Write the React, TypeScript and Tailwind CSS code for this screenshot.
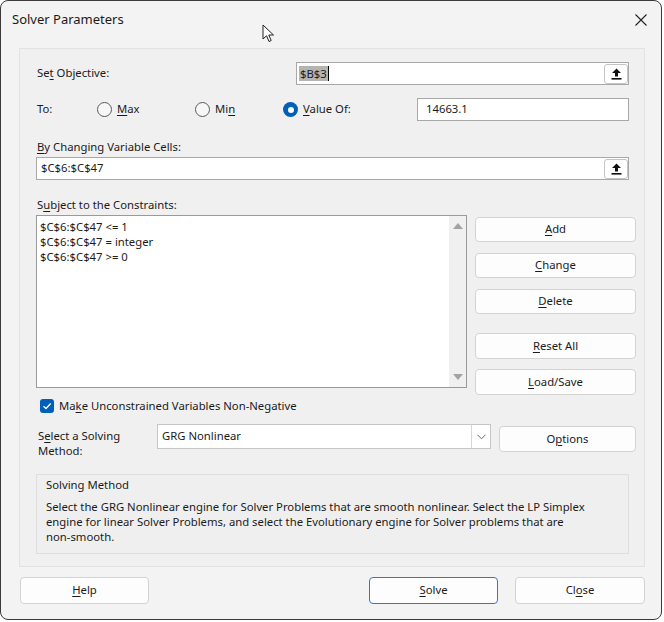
import React from "react";

const F = { fontFamily: '"Noto Sans", "Open Sans", sans-serif' };

function UploadIcon() {
  return (
    <svg width="11" height="12" viewBox="0 0 11 12">
      <path d="M5.5 0.5 L10 5 H7 V8.5 H4 V5 H1 Z" fill="#111" />
      <rect x="0.5" y="10" width="10" height="1.6" fill="#111" />
    </svg>
  );
}

function RefInput({ width, children }: { width: string; children?: React.ReactNode }) {
  return (
    <div className={`${width} h-[23px] bg-white border border-[#a8a8a8] flex items-center relative`}>
      <div className="flex-1 pl-[2px] flex items-center">{children}</div>
      <div className="w-[24px] h-[20px] rounded-[3px] border border-[#c4c4c4] bg-white flex items-center justify-center">
        <UploadIcon />
      </div>
    </div>
  );
}

function Radio({ checked }: { checked?: boolean }) {
  if (checked) {
    return (
      <div className="w-[15px] h-[15px] rounded-full bg-[#005fb8] flex items-center justify-center">
        <div className="w-[6px] h-[6px] rounded-full bg-white" />
      </div>
    );
  }
  return <div className="w-[15px] h-[15px] rounded-full border border-[#5a5a5a] bg-[#f7f7f7]" />;
}

function Btn({ className, children }: { className: string; children: React.ReactNode }) {
  return (
    <div className={`${className} rounded-[4px] border border-[#d3d3d3] bg-[#fdfdfd] flex items-center justify-center text-[11.3px] text-[#1b1b1b]`}>
      <span>{children}</span>
    </div>
  );
}

export default function App() {
  return (
    <div className="w-[664px] h-[622px] bg-white relative text-[#1b1b1b]" style={F}>
      <div className="w-[662px] h-[620px] border border-[#3a3a3a] rounded-[8px] bg-[#f3f3f3] flex flex-col">
        {/* title bar */}
        <div className="h-[38px] flex items-center justify-between pl-[11px] pr-[14px]">
          <span className="text-[13px] text-[#1a1a1a]">Solver Parameters</span>
          <svg width="12" height="12" viewBox="0 0 12 12">
            <path d="M0.5 0.5 L11.5 11.5 M11.5 0.5 L0.5 11.5" stroke="#222" strokeWidth="1.1" />
          </svg>
        </div>
        {/* panel */}
        <div className="ml-[18px] mt-[9px] w-[626px] h-[519px] border border-[#e2e2e2] bg-[#f0f0f0] pl-[16px] flex flex-col text-[11.3px]">
          {/* row 1 */}
          <div className="mt-[13px] h-[23px] flex items-center">
            <div className="w-[260px] pl-[1px]">
              Se<u className="underline-offset-2">t</u> Objective:
            </div>
            <RefInput width="w-[333px]">
              <span className="bg-[#b4b4b4] px-[1px] leading-[15px]">$B$3</span>
              <span className="w-[1px] h-[15px] bg-black" />
            </RefInput>
          </div>
          {/* row 2 */}
          <div className="mt-[13px] h-[23px] flex items-center">
            <div className="w-[61px] pl-[1px]">To:</div>
            <div className="w-[98px] flex items-center gap-[5px]">
              <Radio />
              <span>
                <u className="underline-offset-2">M</u>ax
              </span>
            </div>
            <div className="w-[88px] flex items-center gap-[5px]">
              <Radio />
              <span>
                Mi<u className="underline-offset-2">n</u>
              </span>
            </div>
            <div className="w-[134px] flex items-center gap-[5px]">
              <Radio checked />
              <span>
                <u className="underline-offset-2">V</u>alue Of:
              </span>
            </div>
            <div className="w-[212px] h-[23px] bg-white border border-[#a8a8a8] flex items-center pl-[8px]">14663.1</div>
          </div>
          {/* row 3 */}
          <div className="mt-[18px] h-[16px] flex items-center pl-[1px]">
            <span>
              <u className="underline-offset-2">B</u>y Changing Variable Cells:
            </span>
          </div>
          <div className="mt-[2px]">
            <RefInput width="w-[593px]">
              <span className="pl-[2px]">$C$6:$C$47</span>
            </RefInput>
          </div>
          {/* row 5 */}
          <div className="mt-[17px] h-[16px] flex items-center pl-[1px]">
            <span>
              S<u className="underline-offset-2">u</u>bject to the Constraints:
            </span>
          </div>
          {/* row 6 */}
          <div className="mt-[2px] h-[173px] flex items-start gap-[8px]">
            <div className="w-[431px] h-[173px] bg-white border border-[#9a9a9a] flex">
              <div className="flex-1 pl-[3px] pt-[3px] leading-[15px]">
                <div>$C$6:$C$47 &lt;= 1</div>
                <div>$C$6:$C$47 = integer</div>
                <div>$C$6:$C$47 &gt;= 0</div>
              </div>
              <div className="w-[17px] bg-[#f0f0f0] flex flex-col items-center justify-between py-[7px]">
                <svg width="10" height="6" viewBox="0 0 10 6">
                  <path d="M5 0 L10 6 H0 Z" fill="#a3a3a3" />
                </svg>
                <svg width="10" height="6" viewBox="0 0 10 6">
                  <path d="M0 0 H10 L5 6 Z" fill="#a3a3a3" />
                </svg>
              </div>
            </div>
            <div className="mt-[2px] w-[161px] flex flex-col">
              <Btn className="h-[25px]">
                <u className="underline-offset-2">A</u>dd
              </Btn>
              <Btn className="h-[25px] mt-[11px]">
                <u className="underline-offset-2">C</u>hange
              </Btn>
              <Btn className="h-[25px] mt-[11px]">
                <u className="underline-offset-2">D</u>elete
              </Btn>
              <Btn className="h-[26px] mt-[19px]">
                <u className="underline-offset-2">R</u>eset All
              </Btn>
              <Btn className="h-[26px] mt-[10px]">
                <u className="underline-offset-2">L</u>oad/Save
              </Btn>
            </div>
          </div>
          {/* row 7 */}
          <div className="mt-[10px] h-[16px] flex items-center gap-[5px] pl-[4px]">
            <div className="w-[14px] h-[14px] rounded-[3px] bg-[#005fb8] flex items-center justify-center">
              <svg width="10" height="8" viewBox="0 0 10 8">
                <path d="M1.5 4.2 L4 6.5 L8.7 1.5" stroke="white" strokeWidth="1.3" fill="none" />
              </svg>
            </div>
            <span>
              Ma<u className="underline-offset-2">k</u>e Unconstrained Variables Non-Negative
            </span>
          </div>
          {/* row 8 */}
          <div className="mt-[10px] h-[36px] flex items-start">
            <div className="w-[121px] pl-[2px] pt-[4px] leading-[15px]">
              <div>
                S<u className="underline-offset-2">e</u>lect a Solving
              </div>
              <div>Method:</div>
            </div>
            <div className="w-[334px] h-[25px] bg-white border border-[#c6c6c6] flex items-center">
              <div className="flex-1 pl-[4px]">GRG Nonlinear</div>
              <div className="w-[19px] h-[23px] border-l border-[#d6d6d6] flex items-center justify-center">
                <svg width="9" height="6" viewBox="0 0 9 6">
                  <path d="M0.5 0.8 L4.5 4.8 L8.5 0.8" stroke="#666" strokeWidth="1" fill="none" />
                </svg>
              </div>
            </div>
            <Btn className="ml-[8px] mt-[2px] w-[137px] h-[26px]">
              O<u className="underline-offset-2">p</u>tions
            </Btn>
          </div>
          {/* group */}
          <div className="mt-[14px] w-[593px] h-[80px] border border-[#dedede] bg-[#efefef] pl-[9px] pt-[2px]">
            <div className="leading-[16px]">Solving Method</div>
            <div className="mt-[6px] leading-[15px]">
              Select the GRG Nonlinear engine for Solver Problems that are smooth nonlinear. Select the LP Simplex
              <br />
              engine for linear Solver Problems, and select the Evolutionary engine for Solver problems that are
              <br />
              non-smooth.
            </div>
          </div>
        </div>
        {/* bottom buttons */}
        <div className="mt-[10px] flex items-start pl-[19px]">
          <Btn className="w-[129px] h-[27px]">
            <u className="underline-offset-2">H</u>elp
          </Btn>
          <div className="ml-[220px] w-[129px] h-[27px] rounded-[4px] border border-[#2c7ad0] bg-[#fdfdfd] flex items-center justify-center text-[11.3px]">
            <span>
              <u className="underline-offset-2">S</u>olve
            </span>
          </div>
          <Btn className="ml-[17px] w-[130px] h-[27px]">
            Cl<u className="underline-offset-2">o</u>se
          </Btn>
        </div>
      </div>
      {/* mouse cursor overlay */}
      <svg className="absolute left-[262px] top-[24px]" width="14" height="19" viewBox="0 0 14 19">
        <path d="M1 1 L1 15 L4.5 11.8 L7 17.5 L9.2 16.5 L6.8 11 L11.5 11 Z" fill="white" stroke="#222" strokeWidth="1" strokeLinejoin="round" />
      </svg>
    </div>
  );
}
